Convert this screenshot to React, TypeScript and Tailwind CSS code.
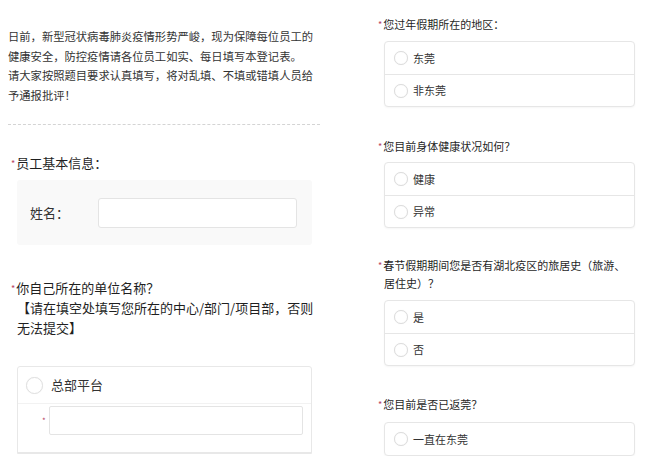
const font = { fontFamily: '"Noto Sans CJK SC", "Noto Sans", sans-serif' };

function Star({ className = '' }: { className?: string }) {
  return <span className={`text-[#b8445f] text-[9px] leading-none relative -top-[1px] mr-[1px] ${className}`}>*</span>;
}

function Radio() {
  return (
    <span className="w-[14px] h-[14px] rounded-full border border-[#dcdcdc] bg-white shadow-[0_0_1px_rgba(0,0,0,0.08)] shrink-0" />
  );
}

function Choices({ items }: { items: string[] }) {
  return (
    <div className="w-[251px] border border-[#e6e6e6] rounded-[4px] bg-white shadow-[0_1px_2px_rgba(0,0,0,0.04)]">
      {items.map((t, i) => (
        <div
          key={t}
          className={`h-[32px] flex items-center pl-[9px] gap-[5px] text-[11px] text-[#333] ${i > 0 ? 'border-t border-[#e6e6e6]' : ''}`}
        >
          <Radio />
          <span>{t}</span>
        </div>
      ))}
    </div>
  );
}

export default function App() {
  return (
    <div className="w-[668px] h-[456px] overflow-hidden bg-white grid grid-cols-[334px_334px]" style={font}>
      {/* left column */}
      <div className="flex flex-col pt-[27px]">
        <p className="pl-[8px] text-[11.3px] leading-[19.5px] text-[#333] whitespace-nowrap">
          日前，新型冠状病毒肺炎疫情形势严峻，现为保障每位员工的
          <br />
          健康安全，防控疫情请各位员工如实、每日填写本登记表。
          <br />
          请大家按照题目要求认真填写，将对乱填、不填或错填人员给
          <br />
          予通报批评！
        </p>

        <div className="ml-[8px] mt-[19px] w-[312px] border-t border-dashed border-[#d4d4d4]" />

        <div className="mt-[28px] pl-[17px] h-[20px] text-[13px] leading-[20px] text-[#1f1f1f]">
          <Star className="-ml-[6px]" />
          员工基本信息：
        </div>

        <div className="mt-[7px] ml-[17px] w-[295px] h-[65px] bg-[#f9f9f9] rounded-[3px] flex items-center pl-[13px] gap-[29px]">
          <span className="text-[13px] text-[#333]">姓名：</span>
          <div className="w-[199px] h-[30px] bg-white border border-[#e4e4e4] rounded-[3px]" />
        </div>

        <div className="mt-[33px] pl-[17px] h-[60px] text-[13px] leading-[20px] text-[#1f1f1f] whitespace-nowrap">
          <Star className="-ml-[6px]" />
          你自己所在的单位名称？
          <br />
          【请在填空处填写您所在的中心/部门/项目部，否则
          <br />
          无法提交】
        </div>

        <div className="mt-[28px] ml-[17px] w-[295px] border border-[#e8e8e8] rounded-t-[3px] flex flex-col">
          <div className="h-[37px] flex items-center pl-[8px] gap-[8px] border-b border-[#f2f2f2]">
            <span className="w-[17px] h-[17px] rounded-full border border-[#e0e0e0] bg-white shadow-[0_0_1px_rgba(0,0,0,0.08)]" />
            <span className="text-[13px] text-[#333]">总部平台</span>
          </div>
          <div className="flex items-center pl-[24px] pt-[2px] pb-[17px] gap-[3px]">
            <span className="text-[#b8445f] text-[8px]">*</span>
            <div className="w-[254px] h-[29px] border border-[#e4e4e4] rounded-[2px] bg-white" />
          </div>
          <div className="border-t border-[#e8e8e8]" />
        </div>
      </div>

      {/* right column */}
      <div className="flex flex-col pl-[50px] pt-[15px]">
        <div className="h-[18px] text-[11px] leading-[18px] text-[#1f1f1f]">
          <Star className="-ml-[6px]" />
          您过年假期所在的地区：
        </div>
        <div className="mt-[8px]">
          <Choices items={['东莞', '非东莞']} />
        </div>

        <div className="mt-[30px] h-[18px] text-[11px] leading-[18px] text-[#1f1f1f]">
          <Star className="-ml-[6px]" />
          您目前身体健康状况如何？
        </div>
        <div className="mt-[7px]">
          <Choices items={['健康', '异常']} />
        </div>

        <div className="mt-[29px] h-[35px] text-[11px] leading-[17.5px] text-[#1f1f1f] whitespace-nowrap">
          <Star className="-ml-[6px]" />
          春节假期期间您是否有湖北疫区的旅居史（旅游、
          <br />
          居住史）？
        </div>
        <div className="mt-[8px]">
          <Choices items={['是', '否']} />
        </div>

        <div className="mt-[29px] h-[18px] text-[11px] leading-[18px] text-[#1f1f1f]">
          <Star className="-ml-[6px]" />
          您目前是否已返莞？
        </div>
        <div className="mt-[9px] h-[40px]">
          <Choices items={['一直在东莞']} />
        </div>
      </div>
    </div>
  );
}
